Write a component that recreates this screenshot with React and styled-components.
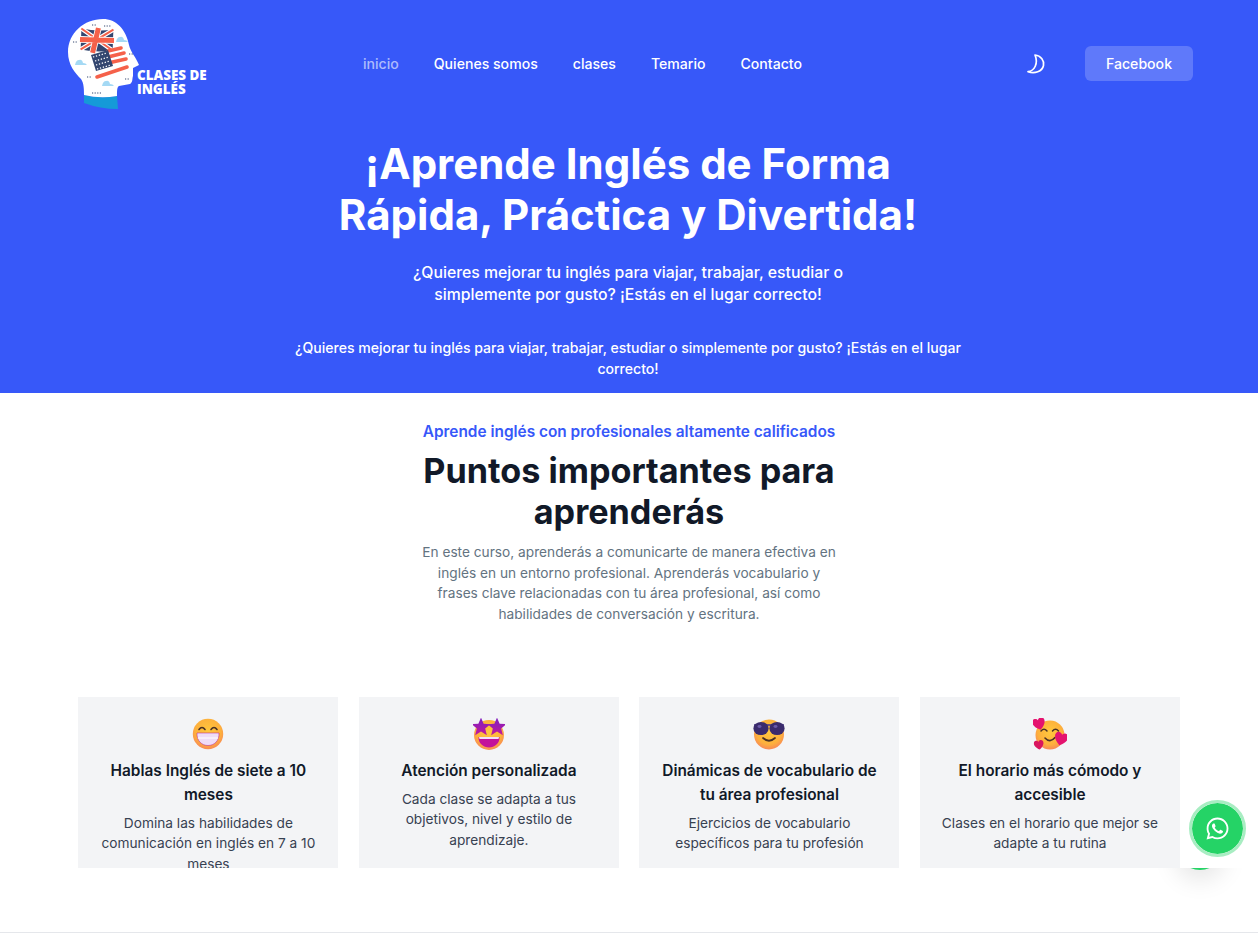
import React from "react";
import styled, { createGlobalStyle } from "styled-components";
import { FaWhatsapp } from "react-icons/fa";

const GlobalStyle = createGlobalStyle`
  html, body {
    margin: 0;
    padding: 0;
    height: 100%;
    overflow: hidden;
    background: #fff;
    font-family: "Inter", "Liberation Sans", sans-serif;
  }
  * { box-sizing: border-box; }
`;

const Logo = () => (
  <LogoBox>
    <svg width="76" height="94" viewBox="66 16 76 94" aria-hidden="true">
      <path d="M84 95 Q100 99 117 96 L118 109 Q100 109 84 103 Z" fill="#159ad8" />
      <path
        d="M103 19 C84 19 68 33 68 52 C68 65 75 73 81 79 C84 83 84 90 84 95 Q100 99 117 96 C117 91 117 87 119 86 L130 84 C133 82 132 79 133 76 L133 68 L139 65 C137 59 130 51 129 45 C126 29 116 19 103 19 Z"
        fill="#fff"
      />
      <g transform="rotate(2 97 40)">
        <path d="M81 29 Q97 32 113 29 L113 50 Q97 53 81 50 Z" fill="#33466f" />
        <path d="M81 29 L113 50 M113 29 L81 50" stroke="#fff" strokeWidth="4.4" />
        <path d="M81 29 L113 50 M113 29 L81 50" stroke="#f5614a" strokeWidth="2" />
        <path d="M98 28 L93 53 M80 40 H114" stroke="#fff" strokeWidth="6.6" />
        <path d="M98 28 L93 53 M80 40 H114" stroke="#f5614a" strokeWidth="5" />
      </g>
      <path d="M108 51 L121 48 M108 57 L124 53 M108 63 L126 59 M97 77 L127 67" stroke="#f5614a" strokeWidth="3.6" strokeLinecap="round" />
      <path d="M91 55 L108 50 L113 66 L96 71 Z" fill="#33466f" />
      <path d="M93 57 L107 53 M95 61 L109 57 M96 65 L110 61 M97 69 L111 65" stroke="#fff" strokeWidth="1.3" strokeDasharray="1.3 1.7" />
      <g fill="#a4d9f4">
        <path d="M116 42 q1 -5 4 -5 q3 -1 4 3 q3 0 4 2 Z" />
        <path d="M75 65 q1 -5 4 -5 q3 -1 4 3 q3 0 4 2 Z" />
        <path d="M102 86 q1 -5 4 -5 q3 -1 4 3 q3 0 4 2 Z" />
      </g>
      <path d="M92 25 h4 M104 26 h7 M73 42 h5 M129 54 h4 M125 79 h4 M87 77 h4 M92 93 h10" stroke="#33466f" strokeWidth="1" strokeDasharray="1.2 1.4" />
    </svg>
    <LogoText>CLASES DE<br />INGLÉS</LogoText>
  </LogoBox>
);

const Moon = () => (
  <svg width="20" height="22" viewBox="0 0 20 22" fill="none" aria-hidden="true">
    <path
      d="M9 2 C15 2.6 18.5 8 17.5 12.5 C16.3 18.5 8.5 21 2 18.6 C8.5 18 12.5 10.5 9 2 Z"
      stroke="#fff"
      strokeWidth="1.7"
      strokeLinejoin="round"
    />
  </svg>
);

const Defs = () => (
  <svg width="0" height="0" style={{ position: "absolute" }} aria-hidden="true">
    <defs>
      <radialGradient id="faceFill" cx="50%" cy="40%" r="65%">
        <stop offset="0%" stopColor="#ffc83d" />
        <stop offset="65%" stopColor="#fdb03c" />
        <stop offset="100%" stopColor="#f77f5e" />
      </radialGradient>
      <linearGradient id="starFill" x1="0" y1="0" x2="0" y2="1">
        <stop offset="0%" stopColor="#7d1fc0" />
        <stop offset="100%" stopColor="#c2189c" />
      </linearGradient>
    </defs>
  </svg>
);

const Grin = () => (
  <svg width="32" height="32" viewBox="0 0 32 32" aria-hidden="true">
    <circle cx="16" cy="16" r="15.2" fill="url(#faceFill)" />
    <path d="M7 11.5 Q10 7.5 13 11.5 M19 11.5 Q22 7.5 25 11.5" stroke="#4a3124" strokeWidth="1.6" fill="none" strokeLinecap="round" />
    <path d="M5 15 H27 C27.5 23 22 27.5 16 27.5 C10 27.5 4.5 23 5 15 Z" fill="#efdcf8" stroke="#b3168f" strokeWidth="0.5" />
    <path d="M5.8 20 H26.2" stroke="#fff" strokeWidth="1" />
  </svg>
);

const star = "M0 -8.5 L2.4 -3 L8.5 -2.6 L3.8 1.4 L5.3 7.4 L0 4.2 L-5.3 7.4 L-3.8 1.4 L-8.5 -2.6 L-2.4 -3 Z";

const StarEyes = () => (
  <svg width="32" height="32" viewBox="0 0 32 32" aria-hidden="true">
    <circle cx="16" cy="17" r="15" fill="url(#faceFill)" />
    <path d={star} transform="translate(8 9) scale(1.1)" fill="url(#starFill)" />
    <path d={star} transform="translate(24 9) scale(1.1)" fill="url(#starFill)" />
    <path d="M5.5 19 H26.5 C27 25 21.5 29.5 16 29.5 C10.5 29.5 5 25 5.5 19 Z" fill="#c3109b" />
    <path d="M6 19 H26 L25.5 21 H6.5 Z" fill="#efe0f7" />
  </svg>
);

const Cool = () => (
  <svg width="32" height="32" viewBox="0 0 32 32" aria-hidden="true">
    <circle cx="16" cy="16.5" r="15" fill="url(#faceFill)" />
    <path d="M1 7 H31" stroke="#4a3a86" strokeWidth="1.6" />
    <ellipse cx="8" cy="10.5" rx="7.6" ry="6.6" fill="#3a2b6d" />
    <ellipse cx="24" cy="10.5" rx="7.6" ry="6.6" fill="#3a2b6d" />
    <ellipse cx="6.5" cy="8.5" rx="2" ry="1.4" fill="#6a5aa8" />
    <ellipse cx="22.5" cy="8.5" rx="2" ry="1.4" fill="#6a5aa8" />
    <path d="M10 20 Q16 25.5 22 20" stroke="#4a3124" strokeWidth="1.7" fill="none" strokeLinecap="round" />
  </svg>
);

const heart = "M0 4 C-6 0 -4.5 -4 -2 -4 C-1 -4 0 -3.2 0 -2.4 C0 -3.2 1 -4 2 -4 C4.5 -4 6 0 0 4 Z";

const Hearts = () => (
  <svg width="34" height="32" viewBox="0 0 34 32" aria-hidden="true">
    <circle cx="17" cy="17" r="14.5" fill="url(#faceFill)" />
    <path d="M8 13 Q11 9.5 14 13 M19.5 13 Q22.5 9.5 25.5 13" stroke="#4a3124" strokeWidth="1.5" fill="none" strokeLinecap="round" />
    <path d="M12 20 Q17 25.5 22 19.5" stroke="#4a3124" strokeWidth="1.6" fill="none" strokeLinecap="round" />
    <path d={heart} transform="translate(6 6) scale(1.5) rotate(-15)" fill="#e4136f" />
    <path d={heart} transform="translate(28 21) scale(1.6) rotate(15)" fill="#e4136f" />
    <path d={heart} transform="translate(6 27) scale(1.15) rotate(-10)" fill="#d9165f" />
  </svg>
);

const features = [
  {
    icon: <Grin />,
    title: "Hablas Inglés de siete a 10 meses",
    text: "Domina las habilidades de comunicación en inglés en 7 a 10 meses",
  },
  {
    icon: <StarEyes />,
    title: "Atención personalizada",
    text: "Cada clase se adapta a tus objetivos, nivel y estilo de aprendizaje.",
  },
  {
    icon: <Cool />,
    title: "Dinámicas de vocabulario de tu área profesional",
    text: "Ejercicios de vocabulario específicos para tu profesión",
  },
  {
    icon: <Hearts />,
    title: "El horario más cómodo y accesible",
    text: "Clases en el horario que mejor se adapte a tu rutina",
  },
];

const links = ["inicio", "Quienes somos", "clases", "Temario", "Contacto"];

export default function App() {
  return (
    <>
      <GlobalStyle />
      <Defs />
      <Page>
        <BackToTop />
        <Main>
          <Hero>
            <Header>
              <Logo />
              <Nav>
                {links.map((l, i) => (
                  <NavLink key={l} href="#" $active={i === 0}>{l}</NavLink>
                ))}
              </Nav>
              <Actions>
                <MoonButton aria-label="Cambiar tema"><Moon /></MoonButton>
                <FacebookButton href="#">Facebook</FacebookButton>
              </Actions>
            </Header>
            <HeroCopy>
              <HeroTitle>¡Aprende Inglés de Forma<br />Rápida, Práctica y Divertida!</HeroTitle>
              <HeroLead>¿Quieres mejorar tu inglés para viajar, trabajar, estudiar o simplemente por gusto? ¡Estás en el lugar correcto!</HeroLead>
              <HeroNote>¿Quieres mejorar tu inglés para viajar, trabajar, estudiar o simplemente por gusto? ¡Estás en el lugar correcto!</HeroNote>
            </HeroCopy>
          </Hero>
          <Features>
            <Intro>
              <Eyebrow>Aprende inglés con profesionales altamente calificados</Eyebrow>
              <SectionTitle>Puntos importantes para aprenderás</SectionTitle>
              <IntroText>En este curso, aprenderás a comunicarte de manera efectiva en inglés en un entorno profesional. Aprenderás vocabulario y frases clave relacionadas con tu área profesional, así como habilidades de conversación y escritura.</IntroText>
            </Intro>
            <CardGrid>
              {features.map((f) => (
                <Card key={f.title}>
                  <CardIcon>{f.icon}</CardIcon>
                  <CardTitle>{f.title}</CardTitle>
                  <CardText>{f.text}</CardText>
                </Card>
              ))}
            </CardGrid>
          </Features>
        </Main>
        <FooterRule />
        <WhatsApp href="#" aria-label="WhatsApp"><FaWhatsapp size={25} color="#fff" /></WhatsApp>
      </Page>
    </>
  );
}

const Page = styled.div`
  position: relative;
  height: 949px;
  overflow: hidden;
`;

const Main = styled.main`
  position: relative;
  z-index: 1;
`;

const Hero = styled.section`
  height: 393px;
  background: #3758f9;
  color: #fff;
  overflow: hidden;
`;

const Header = styled.header`
  display: flex;
  align-items: center;
  height: 127px;
  padding: 0 65px 0 66px;
`;

const LogoBox = styled.div`
  display: flex;
  align-items: flex-end;
  width: 297px;
  height: 94px;
  margin-top: -2px;
`;

const LogoText = styled.div`
  margin: 0 0 14px -5px;
  font: 800 13.4px/14px "Open Sans", sans-serif;
  color: #fff;
`;

const Nav = styled.nav`
  display: flex;
  flex: 1;
  gap: 35px;
`;

const NavLink = styled.a`
  font-size: 14.1px;
  font-weight: 500;
  line-height: 24px;
  text-decoration: none;
  color: ${(p) => (p.$active ? "rgba(255, 255, 255, 0.6)" : "#fff")};
`;

const Actions = styled.div`
  display: flex;
  align-items: center;
  gap: 39px;
`;

const MoonButton = styled.button`
  display: flex;
  padding: 0;
  border: 0;
  background: none;
`;

const FacebookButton = styled.a`
  display: block;
  width: 108px;
  height: 35px;
  border-radius: 6px;
  background: rgba(255, 255, 255, 0.2);
  font-size: 14.1px;
  font-weight: 500;
  line-height: 35px;
  text-align: center;
  text-decoration: none;
  color: #fff;
`;

const HeroCopy = styled.div`
  padding-right: 2px;
  text-align: center;
`;

const HeroTitle = styled.h1`
  margin: 11px 0 0;
  font-size: 42px;
  font-weight: 700;
  line-height: 51px;
`;

const HeroLead = styled.p`
  width: 470px;
  margin: 22px auto 0;
  font-size: 15.8px;
  font-weight: 500;
  line-height: 22px;
`;

const HeroNote = styled.p`
  width: 690px;
  margin: 31px auto 0;
  font-size: 14.05px;
  font-weight: 500;
  line-height: 21px;
`;

const Features = styled.section`
  height: 475px;
  background: #fff;
  overflow: hidden;
`;

const Intro = styled.div`
  width: 430px;
  margin: 0 auto;
  padding-top: 28px;
  text-align: center;
`;

const Eyebrow = styled.div`
  font-size: 15.4px;
  font-weight: 600;
  line-height: 21px;
  white-space: nowrap;
  color: #3758f9;
`;

const SectionTitle = styled.h2`
  margin: 8px 0 0;
  font-size: 34.2px;
  font-weight: 700;
  line-height: 41px;
  color: #111928;
`;

const IntroText = styled.p`
  width: 420px;
  margin: 10px auto 0;
  font-size: 13.7px;
  line-height: 20.5px;
  color: #637381;
`;

const CardGrid = styled.div`
  display: grid;
  grid-template-columns: repeat(4, 260px);
  justify-content: space-between;
  margin: 73px 78px 0 78.4px;
`;

const Card = styled.article`
  height: 171px;
  padding: 21px 14px 0;
  background: #f3f4f6;
  overflow: hidden;
  text-align: center;
`;

const CardIcon = styled.div`
  display: flex;
  justify-content: center;
  height: 32px;
`;

const CardTitle = styled.h3`
  margin: 9px 0 0;
  font-size: 15.4px;
  font-weight: 600;
  line-height: 24px;
  color: #111928;
`;

const CardText = styled.p`
  margin: 5.5px 0 0;
  font-size: 13.7px;
  line-height: 20.6px;
  color: #374151;
`;

const FooterRule = styled.div`
  height: 1px;
  margin-top: 64px;
  background: #e5e7eb;
`;

const BackToTop = styled.div`
  position: absolute;
  left: 1175px;
  top: 820px;
  width: 50px;
  height: 50px;
  border-radius: 50%;
  background: #25d366;
  box-shadow: 0 10px 25px rgba(0, 0, 0, 0.1);
`;

const WhatsApp = styled.a`
  position: absolute;
  z-index: 2;
  left: 1189px;
  top: 800px;
  display: flex;
  align-items: center;
  justify-content: center;
  width: 57px;
  height: 57px;
  border: 3px solid #a8edc2;
  border-radius: 50%;
  background: #25d366;
  background-clip: padding-box;
`;
